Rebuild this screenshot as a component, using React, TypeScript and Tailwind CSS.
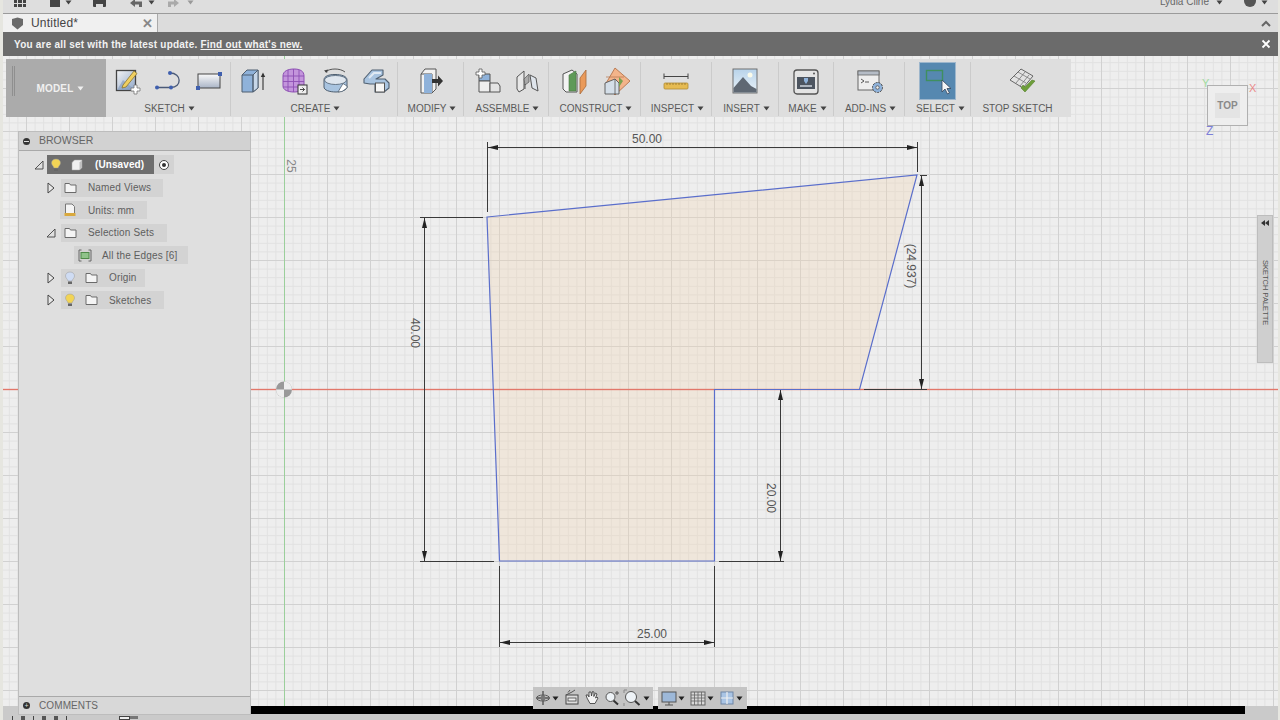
import React from "react";

const Caret = ({ c = "#444" }: { c?: string }) => (
  <svg width="7" height="5" viewBox="0 0 7 5" className="inline-block shrink-0">
    <path d="M0.5 0.5H6.5L3.5 4.5Z" fill={c} />
  </svg>
);

const I = ({ children, w = 32, h = 32 }: { children: React.ReactNode; w?: number; h?: number }) => (
  <svg width={w} height={h} viewBox={`0 0 ${w} ${h}`} className="shrink-0">
    {children}
  </svg>
);

const SketchIcon = () => (
  <I>
    <defs>
      <linearGradient id="sk1" x1="0" y1="0" x2="1" y2="1">
        <stop offset="0" stopColor="#f4f4f4" />
        <stop offset="1" stopColor="#8fa6c8" />
      </linearGradient>
    </defs>
    <rect x="5.500" y="5.500" width="19" height="20" fill="url(#sk1)" stroke="#444" strokeWidth="1.300" />
    <path d="M6 25L12 15L24 25Z" fill="#7f97ba" opacity=".6" />
    <path d="M12 20L23 6L26 8.500L15 22L11 23Z" fill="#f0cf60" stroke="#8a7530" strokeWidth=".8" />
    <path d="M20 23h3v-3h3v3h3v3h-3v3h-3v-3h-3z" fill="#fff" stroke="#777" strokeWidth=".8" />
  </I>
);
const LineIcon = () => (
  <I>
    <path d="M5 22.500H19M18 8C30 8 30 22.500 19 22.500" fill="none" stroke="#4a5a78" strokeWidth="1.300" />
    <circle cx="5" cy="22.500" r="2" fill="#3f5fae" />
    <circle cx="19" cy="22.500" r="2" fill="#3f5fae" />
    <circle cx="18" cy="8" r="2" fill="#3f5fae" />
  </I>
);
const RectIcon = () => (
  <I>
    <defs>
      <linearGradient id="rc1" x1="0" y1="0" x2="0" y2="1">
        <stop offset="0" stopColor="#fafafa" />
        <stop offset="1" stopColor="#a9b4c6" />
      </linearGradient>
    </defs>
    <rect x="5" y="9" width="22" height="14" fill="url(#rc1)" stroke="#444" strokeWidth="1" />
    <rect x="25" y="7" width="4" height="4" fill="#3f5fae" />
    <rect x="3" y="21" width="4" height="4" fill="#3f5fae" />
  </I>
);
const ExtrudeIcon = () => (
  <I>
    <path d="M5 10L10 5H21V23L16 27H5Z" fill="#8fb2da" stroke="#4f5f70" strokeWidth="1" />
    <path d="M16 10L21 5V23L16 27Z" fill="#c6d6e8" stroke="#4f5f70" strokeWidth="1" />
    <path d="M5 10H16V27" fill="none" stroke="#4f5f70" strokeWidth="1" />
    <path d="M26 25V10" stroke="#333" strokeWidth="1.100" />
    <path d="M23.800 12L26 7.500L28.200 12Z" fill="#333" />
  </I>
);
const MeshIcon = () => (
  <I>
    <path d="M5 11C5 6 10 4 16 4S26 6 26 11V21C26 25 21 27 16 27C10 27 5 25 5 21Z" fill="#c395dc" stroke="#8d4fb3" strokeWidth="1" />
    <path d="M5 11H26M5 16.500H26M5 22H26M10 5V26M15.500 4V27M21 5V26" stroke="#8d4fb3" strokeWidth=".9" fill="none" />
    <rect x="20" y="20" width="9" height="9" fill="#eee" stroke="#333" strokeWidth="1" />
    <path d="M22 24.500H26.500M24.500 22.500L26.500 24.500L24.500 26.500" stroke="#333" fill="none" strokeWidth=".9" />
  </I>
);
const RevolveIcon = () => (
  <I>
    <path d="M5 15C5 11 10 9.500 16 9.500S28 11 28 15V22C28 25 22 27 17 27C10 27 5 25 5 22Z" fill="#a9c4e0" stroke="#4f5f70" strokeWidth="1" />
    <ellipse cx="16.500" cy="15" rx="11" ry="4.500" fill="#dfe6ee" stroke="#4f5f70" strokeWidth=".8" />
    <path d="M19 27L24 18.500L28 21V23L23 26.500Z" fill="#fff" stroke="#4f5f70" strokeWidth=".8" />
    <path d="M6 7C11 3 21 3 26 7" fill="none" stroke="#444" strokeWidth=".9" />
    <path d="M5 5.500L9 4.500L8 8Z" fill="#444" />
  </I>
);
const SweepIcon = () => (
  <I>
    <path d="M4 14L12 5H23V10L16 14H25L29 18V23L24 27H15V19H10L4 18Z" fill="#a9c4e0" stroke="#4f5f70" strokeWidth="1.100" strokeLinejoin="round" />
    <path d="M9 13L14 8H21" fill="none" stroke="#dfe9f3" strokeWidth="2" />
    <rect x="15.500" y="18" width="9" height="9" fill="#f6f6f6" stroke="#555" strokeWidth="1" />
  </I>
);
const ModifyIcon = () => (
  <I>
    <path d="M6 9L10 4H21V24L17 28H6Z" fill="#f2f2f2" stroke="#555" strokeWidth="1" />
    <path d="M6 9H17V28" fill="none" stroke="#555" />
    <path d="M9 9H17V28H9Z" fill="#8fb2da" />
    <path d="M17 14H23V10.500L28 16L23 21.500V18H17Z" fill="#333" />
  </I>
);
const NewCompIcon = () => (
  <I>
    <path d="M9 9H20V16H9Z" fill="#8fb2da" stroke="#555" />
    <path d="M9 16H20V27H9Z" fill="#eee" stroke="#555" />
    <path d="M20 18H28L30 21V27H20Z" fill="#e4e4e4" stroke="#555" />
    <path d="M6 7H9V4H12V7H15V10H12V13H9V10H6Z" fill="#fff" stroke="#666" strokeWidth=".9" />
  </I>
);
const JointIcon = () => (
  <I>
    <path d="M6 12L13 6V24L8 27L6 24Z" fill="#e8e8e8" stroke="#555" />
    <path d="M19 10L25 13L27 26L21 23Z" fill="#dfe5ec" stroke="#555" />
    <path d="M13 14L18 9V17L14 20Z" fill="#aaa" stroke="#555" strokeWidth=".7" />
    <path d="M14 19V24" stroke="#555" />
  </I>
);
const PlaneIcon = () => (
  <I>
    <path d="M5 9L14 5L19 9V27H8L5 24Z" fill="#f3f3f3" stroke="#555" />
    <path d="M11 10L18 6V26H11Z" fill="#5f9a58" stroke="#4a7a45" strokeWidth=".6" />
    <path d="M22 13L28 5V21L22 29Z" fill="#ea9a5a" stroke="#a86a3a" strokeWidth=".8" />
  </I>
);
const AxisIcon = () => (
  <I>
    <path d="M16 3L31 16L16 30L6 20Z" fill="#f3b48a" stroke="#b5744b" strokeWidth=".9" />
    <path d="M6 18L16 14L20 18V29H6Z" fill="#d4dee8" stroke="#555" strokeWidth=".9" />
    <path d="M16 14V29" stroke="#555" strokeWidth=".8" />
    <path d="M20 12L24 16L20 22Z" fill="#7ba14f" />
    <path d="M7 12L25 12" stroke="#b5744b" strokeWidth=".7" />
  </I>
);
const InspectIcon = () => (
  <I>
    <path d="M4 8.500V14M28 8.500V14M4 11.500H28" stroke="#444" strokeWidth="1" fill="none" />
    <rect x="4" y="18" width="24" height="6" rx="1" fill="#e6bb52" stroke="#b08b35" strokeWidth=".8" />
    <path d="M7 18V20M10 18V20M13 18V20M16 18V20M19 18V20M22 18V20M25 18V20" stroke="#8a6e28" strokeWidth=".7" />
  </I>
);
const InsertIcon = () => (
  <I>
    <defs>
      <linearGradient id="sky" x1="0" y1="0" x2="0" y2="1">
        <stop offset="0" stopColor="#b8d3ea" />
        <stop offset="1" stopColor="#eaf2f8" />
      </linearGradient>
    </defs>
    <rect x="4" y="4" width="24" height="24" fill="url(#sky)" stroke="#666" strokeWidth=".9" />
    <circle cx="21" cy="10" r="2.500" fill="#fbfbea" />
    <path d="M4.500 27.500V23L14 12L22 21L27.500 24V27.500Z" fill="#5f6873" />
  </I>
);
const MakeIcon = () => (
  <I>
    <rect x="4" y="5" width="24" height="24" rx="3" fill="#e4e4e4" stroke="#555" strokeWidth="1.300" />
    <rect x="7" y="12" width="18" height="12" fill="#4d5560" />
    <path d="M14 13H18V16L16 19L14 16Z" fill="#8fb2da" />
    <path d="M10 21H22" stroke="#cfd6de" strokeWidth="1.500" />
    <circle cx="24" cy="8.500" r="1" fill="#555" />
  </I>
);
const AddInsIcon = () => (
  <I>
    <rect x="5" y="6" width="21" height="19" fill="#eee" stroke="#666" />
    <rect x="5" y="6" width="21" height="4" fill="#b5bcc6" stroke="#666" strokeWidth=".8" />
    <path d="M8 14L11 16L8 18M12 17H16" fill="none" stroke="#333" strokeWidth=".8" />
    <circle cx="24.500" cy="22.500" r="5" fill="#8fb2da" stroke="#444" strokeWidth="1" strokeDasharray="2 1" />
    <circle cx="24.500" cy="22.500" r="1.700" fill="#eee" stroke="#444" strokeWidth=".7" />
  </I>
);
const SelectIcon = () => (
  <svg width="35" height="36" viewBox="0 0 35 36" className="shrink-0">
    <rect x="6.500" y="7.500" width="16" height="10" fill="none" stroke="#3f8f5f" strokeWidth="1.400" />
    <path d="M22 17V29L25 26L27.500 31L29.500 30L27 25.500H31Z" fill="#f5f5f5" stroke="#33445a" strokeWidth=".8" />
  </svg>
);
const StopSketchIcon = () => (
  <I>
    <path d="M5 15L16 4L28 11L18 23Z" fill="#e2e2e2" stroke="#666" strokeWidth="1" />
    <path d="M9 11L21 18M13 7L25 14M11 18L20 7M15 21L24 10" stroke="#777" strokeWidth=".8" />
    <path d="M16 23L20 27L30 16L27 15L20 22L18 20Z" fill="#6d9e3a" stroke="#55802a" strokeWidth=".6" />
  </I>
);

const groups: { label: string; w: number; icons: React.ReactNode[] }[] = [
  { label: "SKETCH", w: 125, icons: [<SketchIcon />, <LineIcon />, <RectIcon />] },
  { label: "CREATE", w: 167, icons: [<ExtrudeIcon />, <MeshIcon />, <RevolveIcon />, <SweepIcon />] },
  { label: "MODIFY", w: 66, icons: [<ModifyIcon />] },
  { label: "ASSEMBLE", w: 85, icons: [<NewCompIcon />, <JointIcon />] },
  { label: "CONSTRUCT", w: 92, icons: [<PlaneIcon />, <AxisIcon />] },
  { label: "INSPECT", w: 71, icons: [<InspectIcon />] },
  { label: "INSERT", w: 67, icons: [<InsertIcon />] },
  { label: "MAKE", w: 55, icons: [<MakeIcon />] },
  { label: "ADD-INS", w: 71, icons: [<AddInsIcon />] },
];

const Group = ({ label, w, icons, caret = true, last = false, labelClass = "pl-[3px]", children }: { label: string; w: number; icons?: React.ReactNode[]; caret?: boolean; last?: boolean; labelClass?: string; children?: React.ReactNode }) => (
  <div style={{ width: w }} className={`flex h-[54px] shrink-0 flex-col items-center ${last ? "" : "border-r border-[#cbcbcb]"}`}>
    <div className="flex h-[38px] shrink-0 items-center gap-[9px]">
      {children ??
        icons?.map((ic, i) => (
          <span key={i} className="flex">
            {ic}
          </span>
        ))}
    </div>
    <div className={`flex h-[16px] shrink-0 items-center gap-[3px] whitespace-nowrap text-[10px] text-[#5a5a5a] ${labelClass}`}>
      {label}
      {caret && <Caret />}
    </div>
  </div>
);

const Bulb = ({ c }: { c: string }) => (
  <svg width="12" height="14" viewBox="0 0 12 14" className="shrink-0">
    <path d="M6 1C3 1 1.500 3 1.500 5C1.500 7 3.500 8 4 10H8C8.500 8 10.500 7 10.500 5C10.500 3 9 1 6 1Z" fill={c} stroke="#9a9a9a" strokeWidth=".5" />
    <rect x="4" y="10.500" width="4" height="2.500" fill="#666" />
  </svg>
);
const Folder = () => (
  <svg width="13" height="12" viewBox="0 0 13 12" className="shrink-0">
    <path d="M1 1.500H5.500L6.500 3H12V10.500H1Z" fill="#f4f4f4" stroke="#6a6a6a" />
  </svg>
);
const TriOpen = () => (
  <svg width="10" height="10" viewBox="0 0 10 10" className="shrink-0">
    <path d="M1 9L9 1V9Z" fill="#e0e0e0" stroke="#444" strokeWidth=".9" />
  </svg>
);
const TriClosed = () => (
  <svg width="8" height="12" viewBox="0 0 8 12" className="shrink-0">
    <path d="M1 1L7 6L1 11Z" fill="#e8e8e8" stroke="#444" strokeWidth="1" />
  </svg>
);

const Row = ({ ml, tile, arrow, children }: { ml: string; tile: string; arrow?: React.ReactNode; children: React.ReactNode }) => (
  <div className={`relative flex h-[18px] items-center ${ml}`}>
    {arrow && <span className="absolute left-[-15px] top-0 flex h-[18px] w-[10px] items-center justify-center">{arrow}</span>}
    <div className={`flex h-[18px] items-center whitespace-nowrap bg-[#d3d3d3] text-[10px] tracking-[0.15px] text-[#5e5e5e] ${tile}`}>{children}</div>
  </div>
);

const Browser = () => (
  <div className="absolute left-[15px] top-[75px] flex h-[584px] w-[233px] flex-col border border-[#bdbdbd] bg-[#dfdfdf]">
    <div className="flex h-[19px] shrink-0 items-center gap-[9px] border-b border-[#a9a9a9] bg-[#d2d2d2] pl-[4px] text-[10.500px] text-[#666]">
      <span className="flex h-[7px] w-[7px] items-center justify-center rounded-full bg-[#333]">
        <span className="h-[1px] w-[5px] bg-[#ddd]" />
      </span>
      BROWSER
    </div>
    <div className="flex flex-1 flex-col gap-[4.500px] pt-[4px]">
      <div className="relative ml-[28px] flex h-[19px] items-stretch">
        <span className="absolute left-[-13px] top-0 flex h-[19px] items-center">
          <TriOpen />
        </span>
        <div className="flex w-[107px] items-center bg-[#6e6e6e] pl-[3px] text-[10px] font-bold tracking-[0.1px] text-white">
          <Bulb c="#f2d455" />
          <svg width="12" height="12" viewBox="0 0 12 12" className="ml-[9px] shrink-0">
            <path d="M1 3.500L3.500 1H11V8.500L8.500 11H1Z" fill="#f0f0f0" stroke="#aaa" strokeWidth=".5" />
            <path d="M8.500 3.500L11 1V8.500L8.500 11Z" fill="#bfbfbf" />
          </svg>
          <span className="ml-[12px] whitespace-nowrap">(Unsaved)</span>
        </div>
        <div className="flex w-[20px] items-center justify-center bg-[#d3d3d3]">
          <span className="flex h-[10px] w-[10px] items-center justify-center rounded-full border border-[#444] bg-white">
            <span className="h-[4px] w-[4px] rounded-full bg-[#333]" />
          </span>
        </div>
      </div>
      <Row ml="ml-[42px]" tile="w-[102px] pl-[3px]" arrow={<TriClosed />}>
        <span className="flex w-[24px]"><Folder /></span>
        Named Views
      </Row>
      <Row ml="ml-[41px]" tile="w-[87px] pl-[3px]">
        <svg width="12" height="14" viewBox="0 0 12 14" className="ml-[1px] mr-[12px] shrink-0">
          <path d="M1.500 10V1H8L10.500 3.500V10" fill="#f4f4f4" stroke="#777" />
          <rect x="0.500" y="10" width="11" height="3" fill="#d9a93e" />
        </svg>
        Units: mm
      </Row>
      <Row ml="ml-[42px]" tile="w-[106px] pl-[3px]" arrow={<TriOpen />}>
        <span className="flex w-[24px]"><Folder /></span>
        Selection Sets
      </Row>
      <Row ml="ml-[55px]" tile="w-[114px] pl-[3px]">
        <svg width="14" height="13" viewBox="0 0 14 13" className="ml-[1px] mr-[10px] shrink-0">
          <path d="M3.500 1H1V12H3.500M10.500 1H13V12H10.500" fill="none" stroke="#666" />
          <rect x="3" y="3.500" width="8" height="6" fill="#8fc38a" stroke="#4f8a4a" />
        </svg>
        All the Edges [6]
      </Row>
      <Row ml="ml-[42px]" tile="w-[84px] pl-[3px]" arrow={<TriClosed />}>
        <Bulb c="#cfdcf3" />
        <span className="ml-[9px] mr-[11px] flex"><Folder /></span>
        Origin
      </Row>
      <Row ml="ml-[42px]" tile="w-[103px] pl-[3px]" arrow={<TriClosed />}>
        <Bulb c="#f2d455" />
        <span className="ml-[9px] mr-[11px] flex"><Folder /></span>
        Sketches
      </Row>
    </div>
    <div className="flex h-[18px] shrink-0 items-center gap-[9px] border-t border-[#a9a9a9] bg-[#d8d8d8] pl-[4px] text-[10px] tracking-[0.1px] text-[#666]">
      <span className="flex h-[7px] w-[7px] items-center justify-center rounded-full bg-[#333] text-[7px] leading-none text-[#ddd]">+</span>
      COMMENTS
    </div>
  </div>
);

const arrowH = (x: number, y: number, dir: number) => `M${x} ${y}L${x + dir * 10} ${y - 2.5}V${y + 2.5}Z`;
const arrowV = (x: number, y: number, dir: number) => `M${x} ${y}L${x - 2.5} ${y + dir * 10}H${x + 2.5}Z`;

const Drawing = () => (
  <svg className="absolute inset-0" width="1275" height="650" viewBox="3 56 1275 650">
    <defs>
      <pattern id="minor" x="284" y="389" width="8.600" height="8.600" patternUnits="userSpaceOnUse">
        <path d="M0.500 0V8.600M0 0.500H8.600" stroke="#e1e1e1" strokeWidth="1" fill="none" />
      </pattern>
      <pattern id="major" x="284" y="389" width="43" height="43" patternUnits="userSpaceOnUse">
        <path d="M0.500 0V43M0 0.500H43" stroke="#d1d1d1" strokeWidth="1" fill="none" />
      </pattern>
    </defs>
    <rect x="3" y="56" width="1275" height="650" fill="#eeeeee" />
    <rect x="3" y="56" width="1275" height="650" fill="url(#minor)" />
    <rect x="3" y="56" width="1275" height="650" fill="url(#major)" />
    <path d="M487 217L917 175L859.500 389.500H714.500V561H499.500Z" fill="#f3d3ae" fillOpacity=".3" />
    <rect x="3" y="389" width="1275" height="1" fill="#e2776a" />
    <rect x="3" y="388" width="1275" height="1" fill="#e2776a" fillOpacity=".18" />
    <rect x="3" y="390" width="1275" height="1" fill="#e2776a" fillOpacity=".18" />
    <path d="M284.500 56V706" stroke="#9bcf9b" strokeWidth="1" />
    <path d="M487 217L917 175L859.500 389.500H714.500V561H499.500Z" fill="none" stroke="#5a6ecb" strokeWidth="1.200" />
    <g stroke="#3a3a3a" strokeWidth="1" fill="none">
      <path d="M487.500 142V212M917.500 142V172M487 147.500H917" />
      <path d="M420 217.500H483M420 561.500H494M424.500 217V561" />
      <path d="M719 561.500H784M780.500 390V561" />
      <path d="M921.500 176V389M864 389.500H927M920 175.500H927" />
      <path d="M499.500 566V647M714.500 566V647M499 642.500H714" />
    </g>
    <g fill="#222">
      <path d={arrowH(488, 147.5, 1)} />
      <path d={arrowH(917, 147.5, -1)} />
      <path d={arrowV(424.5, 218, 1)} />
      <path d={arrowV(424.5, 561, -1)} />
      <path d={arrowV(780.5, 390, 1)} />
      <path d={arrowV(780.5, 561, -1)} />
      <path d={arrowV(921.5, 176, 1)} />
      <path d={arrowV(921.5, 389, -1)} />
      <path d={arrowH(500, 642.5, 1)} />
      <path d={arrowH(714, 642.5, -1)} />
    </g>
    <g fontFamily="'Liberation Sans', sans-serif" fontSize="12" fill="#555" textAnchor="middle">
      <text x="647" y="143">50.00</text>
      <text x="652" y="638">25.00</text>
      <text transform="translate(411 333) rotate(90)">40.00</text>
      <text transform="translate(767 498) rotate(90)">20.00</text>
      <text transform="translate(907 266) rotate(90)">(24.937)</text>
      <text transform="translate(287 166) rotate(90)" fill="#888">25</text>
    </g>
    <circle cx="284" cy="389.500" r="8" fill="#999" />
    <path d="M284 389.500H276A8 8 0 0 0 284 397.500ZM284 389.500H292A8 8 0 0 0 284 381.500Z" fill="#eee" />
  </svg>
);

const ViewCube = () => (
  <>
    <div className="absolute left-[1204px] top-[29px] flex h-[41px] w-[41px] items-center justify-center border border-[#b0b0b0] bg-[#eeeeee]">
      <div className="flex h-[25px] w-[25px] items-center justify-center bg-[#e4e4e4] text-[10px] font-bold text-[#8a8a8a]">TOP</div>
    </div>
    <span className="absolute left-[1199px] top-[22px] text-[11px] leading-none text-[#9fdc9f]">Y</span>
    <span className="absolute left-[1246px] top-[27px] text-[11px] leading-none text-[#ea8a8a]">X</span>
    <span className="absolute left-[1203px] top-[69px] text-[12px] leading-none text-[#7d7fd8]">Z</span>
  </>
);

const Palette = () => (
  <div className="absolute left-[1254px] top-[159px] flex h-[148px] w-[16px] flex-col items-center border border-[#bdbdbd] bg-[#cfcfcf]">
    <span className="mt-[4px] mr-[1px] flex">
      <svg width="10" height="6" viewBox="0 0 10 6">
        <path d="M5 0V6L1 3ZM9 0V6L5 3Z" fill="#333" />
      </svg>
    </span>
    <span className="mt-[34px] whitespace-nowrap text-[7.500px] leading-none text-[#555] [writing-mode:vertical-rl]">SKETCH PALETTE</span>
  </div>
);

const NavIcon = ({ children }: { children: React.ReactNode }) => (
  <svg width="18" height="18" viewBox="0 0 18 18" className="shrink-0">
    {children}
  </svg>
);

const NavBars = () => (
  <div className="absolute left-[530px] top-[631px] flex h-[22px] gap-[5px]">
    <div className="flex w-[120px] items-center bg-[#c4c4c4] pl-[1px]">
      <NavIcon>
        <path d="M9 2V16M3 9H15" stroke="#555" strokeWidth="1.400" />
        <ellipse cx="9" cy="9" rx="6.500" ry="3" fill="none" stroke="#555" />
        <circle cx="9" cy="9" r="2.500" fill="#777" />
      </NavIcon>
      <span className="flex"><Caret c="#222" /></span>
      <span className="ml-[4px] flex">
        <NavIcon>
          <path d="M3 6L9 3L12 1M5 3.500L7 1" stroke="#555" fill="none" />
          <rect x="3" y="6" width="12" height="9" fill="#ddd" stroke="#444" />
          <rect x="5" y="9" width="8" height="3" fill="#eee" stroke="#444" strokeWidth=".8" />
        </NavIcon>
      </span>
      <span className="ml-[2px] flex">
        <NavIcon>
          <path d="M4 9L3 6L5 6L6 8L6 3L8 3L8.500 7L9.500 2.500L11 3L10.800 7.500L12.500 4L14 5L12.500 9L14 8L15 9L12 14.500H7Z" fill="#f3f3f3" stroke="#333" strokeWidth=".8" />
        </NavIcon>
      </span>
      <span className="ml-[2px] flex">
        <NavIcon>
          <circle cx="7.500" cy="8" r="4.500" fill="#eef3f7" stroke="#555" />
          <path d="M10.500 11.500L15 15.500" stroke="#333" strokeWidth="2" />
          <path d="M14 2V6M12 4H16" stroke="#555" />
        </NavIcon>
      </span>
      <span className="ml-[2px] flex">
        <NavIcon>
          <circle cx="8" cy="8" r="5.500" fill="#eef3f7" stroke="#555" />
          <path d="M12 12L16.500 16" stroke="#333" strokeWidth="2" />
          <path d="M1 1V4M1 1H4M1 17V14" stroke="#888" fill="none" />
        </NavIcon>
      </span>
      <span className="ml-[2px] flex"><Caret c="#222" /></span>
    </div>
    <div className="flex w-[89px] items-center bg-[#c4c4c4] pl-[2px]">
      <NavIcon>
        <rect x="2" y="3" width="14" height="10" fill="#9db8d8" stroke="#555" />
        <path d="M9 13V16M5 16H13" stroke="#555" />
      </NavIcon>
      <span className="flex"><Caret c="#222" /></span>
      <span className="ml-[4px] flex">
        <NavIcon>
          <rect x="2" y="3" width="14" height="13" fill="#d8d8d8" stroke="#666" />
          <path d="M2 6H16M2 9H16M2 12H16M5.500 3V16M9 3V16M12.500 3V16" stroke="#666" strokeWidth=".8" />
        </NavIcon>
      </span>
      <span className="flex"><Caret c="#222" /></span>
      <span className="ml-[4px] flex">
        <NavIcon>
          <rect x="3" y="3" width="12" height="12" fill="#a9c4e4" stroke="#6f86a6" />
          <path d="M9 3V15M3 9H15" stroke="#f0f0f0" strokeWidth="1.200" />
        </NavIcon>
      </span>
      <span className="flex"><Caret c="#222" /></span>
    </div>
  </div>
);

export default function App() {
  return (
    <div className="flex h-[720px] w-[1280px] flex-col overflow-hidden bg-[#e6e6e0] pl-[3px] pr-[2px] font-['Liberation_Sans',sans-serif]">
      {/* top bar */}
      <div className="flex h-[14px] shrink-0 items-end overflow-hidden border-b border-[#9b9b9b] bg-[#dedede] pb-[6px] text-[#555]">
        <div className="ml-[11px] grid h-[12px] w-[12px] grid-cols-3 gap-[1px]">
          {Array.from({ length: 9 }).map((_, i) => (
            <span key={i} className="bg-[#444]" />
          ))}
        </div>
        <span className="ml-[24px] h-[12px] w-[10px] bg-[#444]" />
        <span className="ml-[5px] mb-[2px] flex"><Caret /></span>
        <span className="ml-[21px] flex h-[12px] w-[13px] items-end justify-center rounded-[1px] bg-[#444]">
          <span className="h-[3px] w-[7px] bg-[#ddd]" />
        </span>
        <svg width="12" height="8" viewBox="0 0 12 8" className="ml-[24px] shrink-0">
          <path d="M0 4L5 0V2.500H12V8H9V5.500H5V8Z" fill="#666" />
        </svg>
        <span className="ml-[6px] mb-[2px] flex"><Caret /></span>
        <svg width="11" height="8" viewBox="0 0 11 8" className="ml-[13px] shrink-0">
          <path d="M11 4L6 0V2.500H0V8H3V5.500H6V8Z" fill="#aaa" />
        </svg>
        <span className="ml-[8px] mb-[2px] flex"><Caret c="#999" /></span>
        <span className="ml-auto text-[10px] leading-[10px] text-[#666]">Lydia Cline</span>
        <span className="ml-[7px] mb-[2px] flex"><Caret /></span>
        <span className="ml-[21px] h-[12px] w-[12px] rounded-full bg-[#555]" />
        <span className="ml-[5px] mr-[10px] mb-[2px] flex"><Caret /></span>
      </div>
      {/* tab row */}
      <div className="flex h-[18px] shrink-0 items-stretch bg-[#dcdcdc]">
        <div className="flex w-[155px] items-center border-r border-[#aaa] bg-[#f0f0f0] pl-[8px]">
          <svg width="13" height="13" viewBox="0 0 13 13" className="shrink-0">
            <path d="M1 2L6.500 0.500L12 2V8L6.500 12.500L1 8Z" fill="#6a6a6a" />
          </svg>
          <span className="ml-[7px] text-[12px] tracking-[0.2px] text-[#444]">Untitled*</span>
          <span className="ml-auto mr-[4px] text-[13px] font-bold leading-none text-[#888]">✕</span>
        </div>
        <svg width="10" height="7" viewBox="0 0 10 7" className="ml-auto mr-[7px] self-center">
          <path d="M1 6L5 2L9 6" fill="none" stroke="#666" strokeWidth="2" />
        </svg>
      </div>
      {/* notification */}
      <div className="flex h-[24px] shrink-0 items-center bg-[#6b6b6b] pl-[11px] pr-[7px] text-[10px] font-bold tracking-[0.22px] text-[#f2f2f2]">
        You are all set with the latest update.&nbsp;<span className="underline">Find out what's new.</span>
        <svg width="10" height="10" viewBox="0 0 10 10" className="ml-auto">
          <path d="M1.500 1.500L8.500 8.500M8.500 1.500L1.500 8.500" stroke="#fff" strokeWidth="1.800" />
        </svg>
      </div>
      {/* main */}
      <div className="relative flex flex-1 flex-col">
        <div className="relative h-[650px] shrink-0">
          <Drawing />
        </div>
        <div className="flex h-[8px] shrink-0 bg-[#cacaca]">
          <div className="ml-[248px] w-[994px] bg-black" />
        </div>
        <div className="flex h-[6px] shrink-0 items-start gap-[8px] bg-[#cacaca] pl-[9px] pt-[2px]">
          <span className="h-[4px] w-[1px] bg-[#444]" />
          <span className="h-[4px] w-[4px] bg-[#555]" />
          <span className="h-[4px] w-[1px] bg-[#444]" />
          <span className="h-[4px] w-[4px] bg-[#555]" />
          <span className="h-[4px] w-[4px] bg-[#555]" />
          <span className="h-[4px] w-[1px] bg-[#444]" />
          <span className="ml-[44px] h-[4px] w-[11px] border border-[#444] bg-[#eee]" />
          <span className="ml-[-8px] h-[3px] w-[8px] bg-[#777]" />
        </div>
        {/* toolbar */}
        <div className="absolute left-[3px] top-[3px] flex h-[58px] w-[1065px] items-start bg-[#dedede]">
          <div className="relative flex h-[58px] w-[100px] shrink-0 items-center justify-center gap-[3px] bg-[#ababab] pl-[8px] text-[10px] font-bold tracking-[0.2px] text-[#f0f0f0]">
            <span className="absolute left-[6px] top-[7px] h-[30px] w-[3px] border-x border-[#8f8f8f]" />
            MODEL
            <Caret c="#f0f0f0" />
          </div>
          <div className="flex pt-[3px]">
            {groups.map((g) => (
              <Group key={g.label} label={g.label} w={g.w} icons={g.icons} />
            ))}
            <Group label="SELECT" w={66} labelClass="pl-[6px]">
              <div className="flex h-[38px] w-[37px] items-center justify-center border border-[#9db6cc] bg-[#5688b0]">
                <SelectIcon />
              </div>
            </Group>
            <Group label="STOP SKETCH" w={100} icons={[<StopSketchIcon />]} caret={false} last labelClass="pr-[7px]" />
          </div>
        </div>
        <ViewCube />
        <Palette />
        <Browser />
        <NavBars />
      </div>
    </div>
  );
}
